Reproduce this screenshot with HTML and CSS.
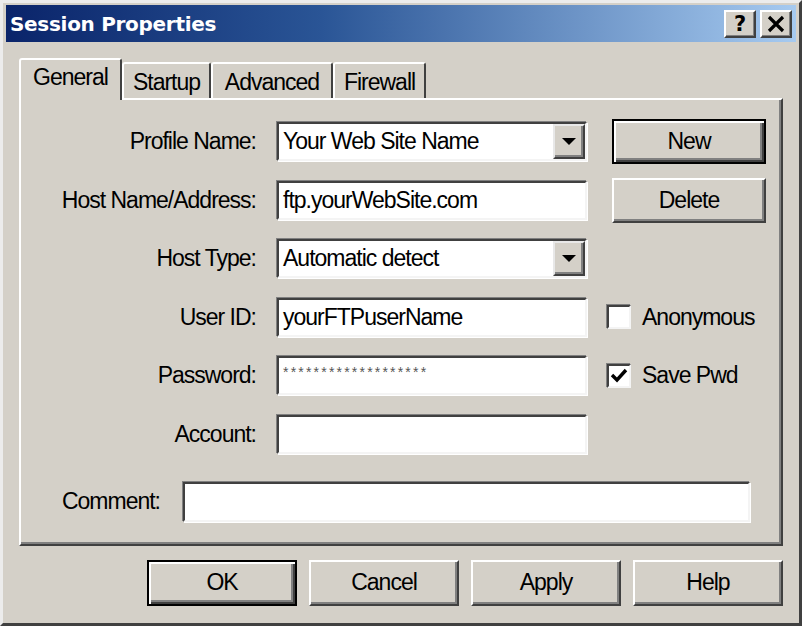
FILE: index.html
```html
<!DOCTYPE html>
<html>
<head>
<meta charset="utf-8">
<link rel="stylesheet" href="styles.css">
</head>
<body>
<div class="window">
  <div class="titlebar">
    <span class="title">Session Properties</span>
    <div class="tb-buttons">
      <div class="tb-btn help">?</div>
      <div class="tb-btn close">
        <svg width="20" height="18" viewBox="0 0 20 18"><path d="M3 2 L17 16 M17 2 L3 16" stroke="#000" stroke-width="3.2" fill="none"/></svg>
      </div>
    </div>
  </div>
  <div class="content">
    <div class="tabs">
      <div class="tab active t-general">General</div>
      <div class="tab t-startup">Startup</div>
      <div class="tab t-advanced">Advanced</div>
      <div class="tab t-firewall">Firewall</div>
    </div>
    <div class="panel">
      <div class="form">
        <label class="lbl">Profile Name:</label>
        <div class="field combo"><span class="val">Your Web Site Name</span><span class="drop"><svg width="14" height="8" viewBox="0 0 14 8"><path d="M0 0 H14 L7 7 Z" fill="#000"/></svg></span></div>
        <div class="side"><div class="btn default side-btn">New</div></div>

        <label class="lbl">Host Name/Address:</label>
        <div class="field"><span class="val">ftp.yourWebSite.com</span></div>
        <div class="side"><div class="btn side-btn">Delete</div></div>

        <label class="lbl">Host Type:</label>
        <div class="field combo"><span class="val">Automatic detect</span><span class="drop"><svg width="14" height="8" viewBox="0 0 14 8"><path d="M0 0 H14 L7 7 Z" fill="#000"/></svg></span></div>
        <div class="side"></div>

        <label class="lbl">User ID:</label>
        <div class="field"><span class="val">yourFTPuserName</span></div>
        <div class="side check-row"><span class="checkbox"></span><span class="check-lbl">Anonymous</span></div>

        <label class="lbl">Password:</label>
        <div class="field pwd"><span class="stars">*******************</span></div>
        <div class="side check-row"><span class="checkbox"><svg width="18" height="16" viewBox="0 0 18 16"><path d="M2 7 L7 12 L16 2" stroke="#000" stroke-width="3.4" fill="none"/></svg></span><span class="check-lbl">Save Pwd</span></div>

        <label class="lbl">Account:</label>
        <div class="field"></div>
        <div class="side"></div>
      </div>
      <div class="comment-row">
        <label class="lbl c-lbl">Comment:</label>
        <div class="field c-field"></div>
      </div>
    </div>
    <div class="actions">
      <div class="btn default act">OK</div>
      <div class="btn act">Cancel</div>
      <div class="btn act">Apply</div>
      <div class="btn act">Help</div>
    </div>
  </div>
</div>
</body>
</html>
```

FILE: styles.css
```css
html, body {
  margin: 0;
  padding: 0;
  background: #d4d0c8;
}

.window {
  width: 802px;
  height: 626px;
  box-sizing: border-box;
  border: 3px solid;
  border-color: #ececec #404040 #404040 #ececec;
  padding: 2px 3px 3px 3px;
  background: #d4d0c8;
  font-family: "Liberation Sans", Arial, sans-serif;
  font-size: 23px;
  letter-spacing: -1px;
  color: #000;
}

.titlebar {
  height: 37px;
  display: flex;
  align-items: center;
  justify-content: space-between;
  background: linear-gradient(to right, #0a246a 0%, #2a5596 40%, #a6caf0 100%);
  padding: 0 4px;
}

.title {
  font-family: "DejaVu Sans", sans-serif;
  font-weight: bold;
  font-size: 20px;
  letter-spacing: -0.3px;
  color: #fff;
}

.tb-buttons {
  display: flex;
  gap: 4px;
  margin-top: 1px;
}

.tb-btn {
  width: 32px;
  height: 28px;
  box-sizing: border-box;
  background: #d4d0c8;
  border: 2px solid;
  border-color: #fff #404040 #404040 #fff;
  box-shadow: inset -1px -1px #808080;
  display: flex;
  align-items: center;
  justify-content: center;
}

.help {
  font-family: "DejaVu Sans", sans-serif;
  font-weight: bold;
  font-size: 21px;
  letter-spacing: 0;
}

.content {
  padding: 16px 13px 0 13px;
}

.tabs {
  display: flex;
  align-items: flex-end;
  height: 40px;
}

.tab {
  height: 36px;
  box-sizing: border-box;
  border: 2px solid;
  border-bottom: none;
  border-color: #fff #404040 transparent #fff;
  border-radius: 3px 3px 0 0;
  display: flex;
  align-items: center;
  justify-content: center;
  padding-top: 3px;
}

.tab.active {
  height: 42px;
  margin-bottom: -2px;
  position: relative;
  z-index: 1;
  background: #d4d0c8;
  padding-top: 0;
  padding-bottom: 6px;
}

.t-general { width: 103px; }
.t-startup { width: 89px; }
.t-advanced { width: 122px; }
.t-firewall { width: 93px; }

.panel {
  border: 2px solid;
  border-color: #fff #404040 #404040 #fff;
  box-shadow: inset -2px -2px #808080;
  padding: 22px 0 22px 0;
}

.form {
  display: grid;
  grid-template-columns: 235px 310px 170px;
  grid-template-rows: repeat(6, 39px);
  column-gap: 21px;
  row-gap: 19.6px;
}

.form > .side { margin-left: -1px; }

.lbl {
  align-self: center;
  text-align: right;
  white-space: nowrap;
}

.field {
  box-sizing: border-box;
  height: 39px;
  background: #fff;
  border: 2px solid;
  border-color: #404040 #f4f4f4 #f4f4f4 #404040;
  box-shadow: -1px -1px #808080, 1px 1px #fff;
  display: flex;
  align-items: center;
  padding-left: 4px;
  white-space: nowrap;
  overflow: hidden;
}

.combo {
  justify-content: space-between;
  padding-right: 0;
}

.drop {
  width: 32px;
  height: 35px;
  box-sizing: border-box;
  background: #d4d0c8;
  border: 2px solid;
  border-color: #e8e8e8 #404040 #404040 #e8e8e8;
  box-shadow: inset -2px -2px #808080;
  display: flex;
  align-items: center;
  justify-content: center;
}

.pwd {
  align-items: flex-start;
  padding-top: 6px;
}

.stars {
  font-size: 14px;
  letter-spacing: 2.2px;
  color: #555;
}

.side {
  display: flex;
  align-items: center;
}

.btn {
  box-sizing: border-box;
  background: #d4d0c8;
  border: 2px solid;
  border-color: #fff #404040 #404040 #fff;
  box-shadow: inset -2px -2px #808080;
  display: flex;
  align-items: center;
  justify-content: center;
}

.btn.default {
  border-color: #000;
  box-shadow: inset 2px 2px #fff, inset -2px -2px #404040, inset -4px -4px #808080;
}

.side-btn {
  width: 154px;
  height: 45px;
  margin: -3px 0 -3px 5px;
}

.check-row {
  gap: 11px;
}

.checkbox {
  width: 24px;
  height: 24px;
  box-sizing: border-box;
  background: #fff;
  border: 2px solid;
  border-color: #404040 #f4f4f4 #f4f4f4 #404040;
  box-shadow: -1px -1px #808080;
  display: flex;
  align-items: center;
  justify-content: center;
}

.comment-row {
  display: flex;
  align-items: center;
  gap: 23px;
  margin-top: 28px;
}

.c-lbl {
  width: 139px;
}

.c-field {
  width: 567px;
  height: 40px;
}

.actions {
  display: flex;
  justify-content: flex-end;
  gap: 12px;
  margin-top: 14px;
}

.act {
  width: 150px;
  height: 46px;
}
```
